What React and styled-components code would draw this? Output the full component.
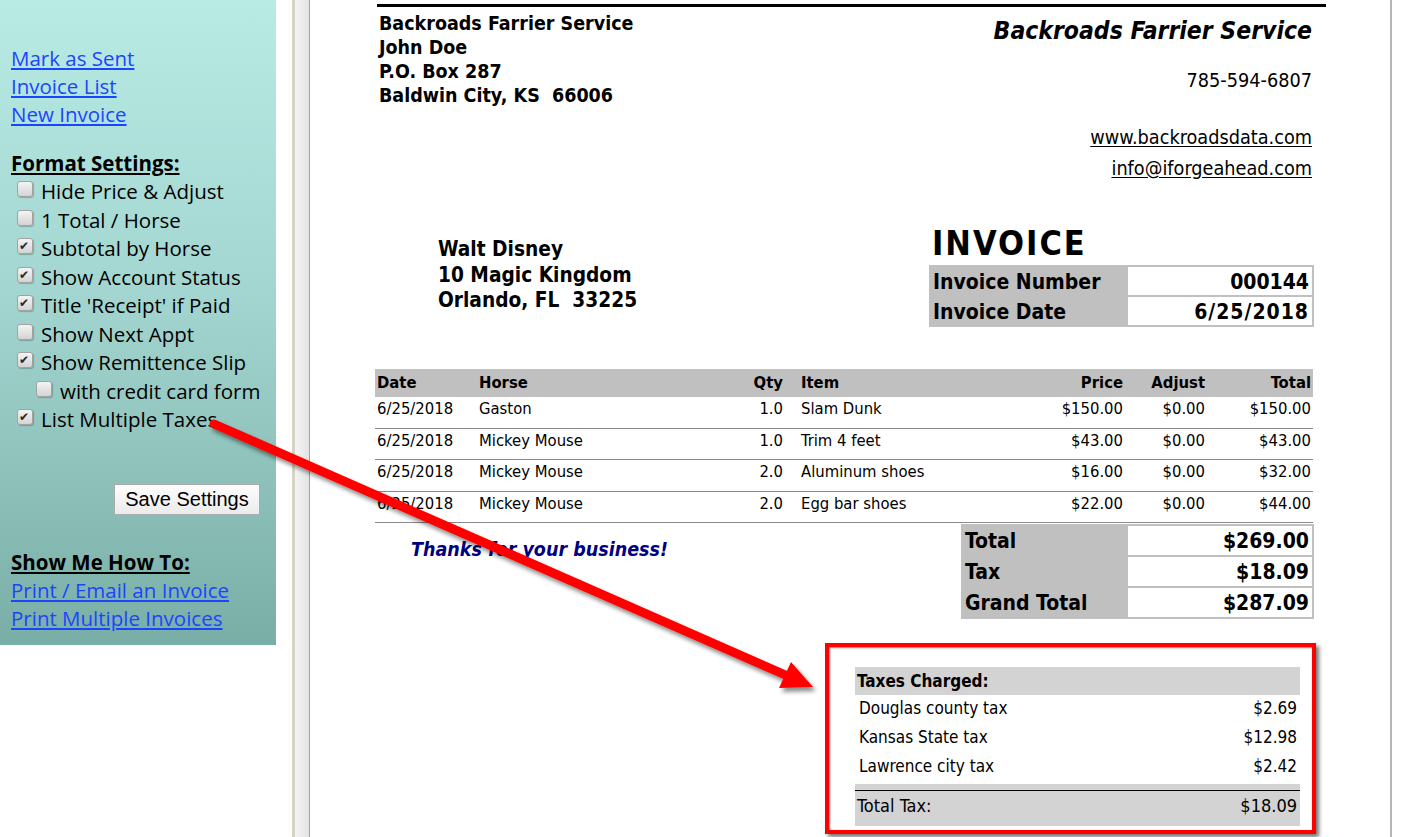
import styled, { createGlobalStyle } from 'styled-components';

const GlobalStyle = createGlobalStyle`
  html, body {
    margin: 0;
    padding: 0;
    background: #fff;
  }
  body {
    width: 1401px;
    height: 837px;
    overflow: hidden;
  }
`;

const invoiceFont = `"DejaVu Sans Condensed", "DejaVu Sans", Verdana, sans-serif`;

const navLinks = ['Mark as Sent', 'Invoice List', 'New Invoice'];

const formatOptions = [
  { label: 'Hide Price & Adjust', checked: false },
  { label: '1 Total / Horse', checked: false },
  { label: 'Subtotal by Horse', checked: true },
  { label: 'Show Account Status', checked: true },
  { label: "Title 'Receipt' if Paid", checked: true },
  { label: 'Show Next Appt', checked: false },
  { label: 'Show Remittence Slip', checked: true },
  { label: 'with credit card form', checked: false, nested: true },
  { label: 'List Multiple Taxes', checked: true },
];

const helpLinks = ['Print / Email an Invoice', 'Print Multiple Invoices'];

const columns = [
  { key: 'date', title: 'Date', align: 'left' },
  { key: 'horse', title: 'Horse', align: 'left' },
  { key: 'qty', title: 'Qty', align: 'right', padRight: 16 },
  { key: 'item', title: 'Item', align: 'left' },
  { key: 'price', title: 'Price', align: 'right' },
  { key: 'adjust', title: 'Adjust', align: 'right' },
  { key: 'total', title: 'Total', align: 'right' },
];

const lineItems = [
  { date: '6/25/2018', horse: 'Gaston', qty: '1.0', item: 'Slam Dunk', price: '$150.00', adjust: '$0.00', total: '$150.00' },
  { date: '6/25/2018', horse: 'Mickey Mouse', qty: '1.0', item: 'Trim 4 feet', price: '$43.00', adjust: '$0.00', total: '$43.00' },
  { date: '6/25/2018', horse: 'Mickey Mouse', qty: '2.0', item: 'Aluminum shoes', price: '$16.00', adjust: '$0.00', total: '$32.00' },
  { date: '6/25/2018', horse: 'Mickey Mouse', qty: '2.0', item: 'Egg bar shoes', price: '$22.00', adjust: '$0.00', total: '$44.00' },
];

const totals = [
  ['Total', '$269.00'],
  ['Tax', '$18.09'],
  ['Grand Total', '$287.09'],
];

const taxes = [
  ['Douglas county tax', '$2.69'],
  ['Kansas State tax', '$12.98'],
  ['Lawrence city tax', '$2.42'],
];

export default function App() {
  return (
    <>
      <GlobalStyle />
      <Screen>
        <Sidebar>
          {navLinks.map((text) => (
            <NavLink key={text} href="#">
              {text}
            </NavLink>
          ))}

          <SectionTitle $gap={21}>Format Settings:</SectionTitle>
          {formatOptions.map((opt) => (
            <OptionRow key={opt.label} $nested={opt.nested}>
              <CheckBox>{opt.checked && <CheckMark>✔</CheckMark>}</CheckBox>
              {opt.label}
            </OptionRow>
          ))}

          <SaveButton type="button">Save Settings</SaveButton>

          <SectionTitle $gap={33}>Show Me How To:</SectionTitle>
          {helpLinks.map((text) => (
            <NavLink key={text} href="#">
              {text}
            </NavLink>
          ))}
        </Sidebar>

        <FrameDivider />

        <PageArea>
          <Invoice>
            <TopRule />

            <Letterhead>
              <CompanyBlock>
                <div>Backroads Farrier Service</div>
                <div>John Doe</div>
                <div>P.O. Box 287</div>
                <div>Baldwin City, KS&nbsp; 66006</div>
              </CompanyBlock>
              <BrandBlock>
                <BrandTitle>Backroads Farrier Service</BrandTitle>
                <ContactLine $gap={23}>785-594-6807</ContactLine>
                <ContactLine $gap={33}>
                  <ContactLink href="#">www.backroadsdata.com</ContactLink>
                </ContactLine>
                <ContactLine $gap={7}>
                  <ContactLink href="#">info@iforgeahead.com</ContactLink>
                </ContactLine>
              </BrandBlock>
            </Letterhead>

            <BillingRow>
              <CustomerBlock>
                <div>Walt Disney</div>
                <div>10 Magic Kingdom</div>
                <div>Orlando, FL&nbsp; 33225</div>
              </CustomerBlock>
              <InvoiceMeta>
                <InvoiceTitle>INVOICE</InvoiceTitle>
                <SummaryGrid $labelWidth={195} $rowHeight={28}>
                  <SummaryLabel>Invoice Number</SummaryLabel>
                  <SummaryValue>000144</SummaryValue>
                  <SummaryLabel>Invoice Date</SummaryLabel>
                  <SummaryValue $spaced>6/25/2018</SummaryValue>
                </SummaryGrid>
              </InvoiceMeta>
            </BillingRow>

            <ItemTable>
              <ItemRow $head>
                {columns.map((col) => (
                  <ItemCell key={col.key} $align={col.align} $padRight={col.padRight}>
                    {col.title}
                  </ItemCell>
                ))}
              </ItemRow>
              {lineItems.map((row, i) => (
                <ItemRow key={i}>
                  {columns.map((col) => (
                    <ItemCell key={col.key} $align={col.align} $padRight={col.padRight}>
                      {row[col.key]}
                    </ItemCell>
                  ))}
                </ItemRow>
              ))}
            </ItemTable>

            <FooterRow>
              <Thanks>Thanks for your business!</Thanks>
              <SummaryGrid $labelWidth={163} $rowHeight={29}>
                {totals.flatMap(([label, value]) => [
                  <SummaryLabel key={label}>{label}</SummaryLabel>,
                  <SummaryValue key={label + '-v'}>{value}</SummaryValue>,
                ])}
              </SummaryGrid>
            </FooterRow>

            <TaxBox>
              <TaxHeader>Taxes Charged:</TaxHeader>
              {taxes.map(([name, amount]) => (
                <TaxRow key={name}>
                  <span>{name}</span>
                  <span>{amount}</span>
                </TaxRow>
              ))}
              <TaxTotalBand>
                <TaxTotalRow>
                  <span>Total Tax:</span>
                  <span>$18.09</span>
                </TaxTotalRow>
              </TaxTotalBand>
            </TaxBox>
          </Invoice>
        </PageArea>

        <Callout width="1401" height="837" viewBox="0 0 1401 837">
          <defs>
            <filter id="arrowShadow" x="-10%" y="-10%" width="130%" height="140%">
              <feDropShadow dx="3" dy="4" stdDeviation="2" floodColor="#000" floodOpacity="0.45" />
            </filter>
          </defs>
          <g filter="url(#arrowShadow)" fill="#ff0000">
            <line x1="214" y1="424" x2="790" y2="677" stroke="#ff0000" strokeWidth="9" strokeLinecap="round" />
            <polygon points="813,687 779,688 791,662" />
          </g>
        </Callout>
      </Screen>
    </>
  );
}

const Screen = styled.div`
  position: relative;
  display: flex;
  width: 1401px;
  height: 837px;
  background: #fff;
`;

/* ---------- left settings panel ---------- */

const Sidebar = styled.aside`
  flex: none;
  width: 276px;
  height: 645px;
  box-sizing: border-box;
  padding: 44px 16px 0 11px;
  background: linear-gradient(180deg, #b9ebe5 0%, #a3d6d0 45%, #79aea6 100%);
  font-family: 'Open Sans', sans-serif;
  font-size: 20.5px;
  line-height: 28px;
  color: #000;
`;

const NavLink = styled.a`
  display: block;
  width: fit-content;
  color: #1a45ff;
  text-decoration: underline;
  text-underline-offset: 2px;
`;

const SectionTitle = styled.div`
  margin-top: ${({ $gap }) => $gap}px;
  width: fit-content;
  font-weight: 700;
  text-decoration: underline;
  text-underline-offset: 2px;
`;

const OptionRow = styled.div`
  display: flex;
  align-items: center;
  height: 28.5px;
  padding-left: ${({ $nested }) => ($nested ? 25 : 6)}px;
  white-space: nowrap;
`;

const CheckBox = styled.span`
  position: relative;
  flex: none;
  width: 14px;
  height: 14px;
  margin: -4px 8px 0 0;
  border: 1px solid #a3a3a3;
  border-radius: 3px;
  background: linear-gradient(180deg, #f4f4f4, #d4d4d4);
  box-shadow: 1px 1px 1px rgba(0, 0, 0, 0.22);
`;

const CheckMark = styled.span`
  position: absolute;
  left: 1px;
  top: -1px;
  font-family: 'DejaVu Sans', sans-serif;
  font-size: 12px;
  font-weight: 700;
  line-height: 16px;
  color: #2a2a2a;
`;

const SaveButton = styled.button`
  display: block;
  width: 146px;
  height: 31px;
  margin: 50px 0 0 auto;
  padding: 0;
  border: 1px solid #acacac;
  background: linear-gradient(180deg, #fdfdfd, #ebebeb);
  font-family: 'Liberation Sans', Arial, sans-serif;
  font-size: 20px;
  color: #000;
`;

/* ---------- frame separator and page ---------- */

const FrameDivider = styled.div`
  flex: none;
  width: 18px;
  height: 100%;
  margin-left: 16px;
  background: linear-gradient(
    90deg,
    #d6d5c5 0 3px,
    #f4f4f4 3px,
    #e3e3e3 17px,
    #a2a2a2 17px
  );
`;

const PageArea = styled.main`
  flex: none;
  width: 1080px;
  height: 100%;
  border-right: 2px solid #b5b5b5;
  background: #fff;
  font-family: ${invoiceFont};
  font-stretch: semi-condensed;
  color: #000;
`;

const Invoice = styled.div`
  width: 951px;
  margin-left: 65px;
`;

const TopRule = styled.div`
  height: 3px;
  margin: 4px 0 0 2px;
  background: #000;
`;

const Letterhead = styled.header`
  display: flex;
  justify-content: space-between;
  align-items: flex-start;
`;

const CompanyBlock = styled.div`
  padding: 5px 0 0 4px;
  font-size: 19.5px;
  font-weight: 700;
  line-height: 24px;
`;

const BrandBlock = styled.div`
  padding-right: 14px;
  text-align: right;
`;

const BrandTitle = styled.div`
  margin-top: 9px;
  font-size: 24.5px;
  font-weight: 700;
  font-style: italic;
  line-height: 30px;
`;

const ContactLine = styled.div`
  margin-top: ${({ $gap }) => $gap}px;
  font-size: 19.7px;
  line-height: 24px;
`;

const ContactLink = styled.a`
  color: #000;
  text-decoration: underline;
  text-underline-offset: 2px;
`;

const BillingRow = styled.section`
  display: flex;
  align-items: flex-start;
  margin-top: 44px;
`;

const CustomerBlock = styled.div`
  padding: 12px 0 0 63px;
  font-size: 20.7px;
  font-weight: 700;
  line-height: 25.5px;
`;

const InvoiceMeta = styled.div`
  margin-left: auto;
  margin-right: 12px;
`;

const InvoiceTitle = styled.h1`
  margin: 0 0 4px 3px;
  font-size: 34px;
  font-weight: 700;
  letter-spacing: 2px;
  line-height: 36px;
`;

const SummaryGrid = styled.div`
  display: grid;
  grid-template-columns: ${({ $labelWidth }) => $labelWidth}px 184px;
  grid-auto-rows: ${({ $rowHeight }) => $rowHeight}px;
  gap: 2px;
  padding: 2px;
  background: #c0c0c0;
  font-size: 21px;
  font-weight: 700;
`;

const SummaryLabel = styled.div`
  padding-left: 2px;
  line-height: 30px;
  white-space: nowrap;
`;

const SummaryValue = styled.div`
  padding-right: 3px;
  background: #fff;
  text-align: right;
  line-height: 30px;
  letter-spacing: ${({ $spaced }) => ($spaced ? '1px' : 'normal')};
`;

/* ---------- line items ---------- */

const ItemTable = styled.div`
  width: 938px;
  margin-top: 42px;
  font-size: 16.5px;
`;

const ItemRow = styled.div`
  display: grid;
  grid-template-columns: 102px 268px 54px 201px 125px 82px 106px;
  box-sizing: border-box;
  height: ${({ $head }) => ($head ? 28 : 31.5)}px;
  line-height: ${({ $head }) => ($head ? 28 : 23)}px;
  font-weight: ${({ $head }) => ($head ? 700 : 400)};
  background: ${({ $head }) => ($head ? '#c0c0c0' : 'transparent')};
  border-bottom: ${({ $head }) => ($head ? 'none' : '1px solid #8a8a8a')};
`;

const ItemCell = styled.div`
  padding: 0 ${({ $padRight }) => $padRight ?? 2}px 0 2px;
  text-align: ${({ $align }) => $align};
  white-space: nowrap;
`;

const FooterRow = styled.div`
  display: flex;
  justify-content: space-between;
  align-items: flex-start;
  width: 939px;
  margin-top: 1px;
`;

const Thanks = styled.div`
  padding: 14px 0 0 36px;
  color: #000080;
  font-size: 19.5px;
  font-weight: 700;
  font-style: italic;
  line-height: 24px;
`;

/* ---------- tax breakdown ---------- */

const TaxBox = styled.div`
  box-sizing: border-box;
  width: 491px;
  margin: 24px 0 0 450px;
  padding: 20px 12px 4px 26px;
  border: 4px solid #ff0000;
  box-shadow: 3px 3px 4px rgba(0, 0, 0, 0.55), inset 1px 1px 2px rgba(0, 0, 0, 0.5);
  font-size: 17px;
`;

const TaxHeader = styled.div`
  height: 28px;
  padding-left: 2px;
  background: #d3d3d3;
  font-weight: 700;
  line-height: 28px;
`;

const TaxRow = styled.div`
  display: flex;
  justify-content: space-between;
  padding: 0 3px 3px 4px;
  line-height: 26px;
`;

const TaxTotalBand = styled.div`
  margin-top: 2px;
  padding: 6px 0 5px;
  background: #d3d3d3;
`;

const TaxTotalRow = styled.div`
  display: flex;
  justify-content: space-between;
  padding: 0 3px 0 2px;
  border-top: 1px solid #000;
  font-size: 18px;
  line-height: 30px;
`;

const Callout = styled.svg`
  position: absolute;
  left: 0;
  top: 0;
  pointer-events: none;
`;
